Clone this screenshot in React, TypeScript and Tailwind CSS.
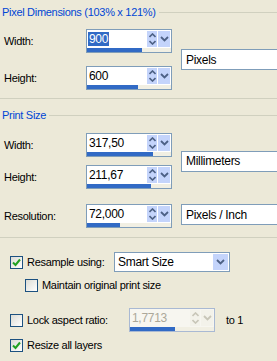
import React from "react"

function SpinButtons({ disabled }: { disabled?: boolean }) {
    const bg = disabled ? "bg-[#f3f2ea]" : "bg-[#c4d4fb]"
    const fg = disabled ? "#c8c6b8" : "#4d6185"
    return (
        <div className="flex h-[16px] gap-[1px] mr-[1px]">
            <div className={`w-[10px] h-full flex flex-col items-center justify-center gap-[2px] ${bg}`}>
                <svg width="7" height="5" viewBox="0 0 7 5">
                    <path d="M0.5 4 L3.5 1 L6.5 4" fill="none" stroke={fg} strokeWidth="1.6" />
                </svg>
                <svg width="7" height="5" viewBox="0 0 7 5">
                    <path d="M0.5 1 L3.5 4 L6.5 1" fill="none" stroke={fg} strokeWidth="1.6" />
                </svg>
            </div>
            <div className={`w-[12px] h-full flex items-center justify-center ${bg}`}>
                <svg width="9" height="6" viewBox="0 0 9 6">
                    <path d="M1 1 L4.5 4.5 L8 1" fill="none" stroke={fg} strokeWidth="1.8" />
                </svg>
            </div>
        </div>
    )
}

function SpinBox({
    value,
    bar,
    selected,
    disabled,
}: {
    value: string
    bar: number
    selected?: boolean
    disabled?: boolean
}) {
    return (
        <div
            className={`w-[86px] h-[24px] shrink-0 border flex flex-col ${
                disabled ? "border-[#a9b9d3] bg-[#f7f6f0]" : "border-[#7f9db9] bg-white"
            }`}
        >
            <div className="h-[18px] flex items-center justify-between">
                <span
                    className={`ml-[1px] px-[1px] leading-[14px] text-[12px] ${
                        selected ? "bg-[#316ac5] text-white" : disabled ? "text-[#aca899]" : "text-black"
                    }`}
                >
                    {value}
                </span>
                <SpinButtons disabled={disabled} />
            </div>
            <div className="h-[4px] bg-[#f1efe3] flex">
                <div className="h-full bg-[#316ac5]" style={{ width: bar }} />
            </div>
        </div>
    )
}

function Field({ text, className = "" }: { text: string; className?: string }) {
    return (
        <div className={`w-[110px] h-[21px] shrink-0 border border-[#7f9db9] bg-white flex items-center pl-[4px] text-[12px] ${className}`}>
            {text}
        </div>
    )
}

function Checkbox({ checked }: { checked?: boolean }) {
    return (
        <div className="w-[13px] h-[13px] border border-[#1c5180] bg-gradient-to-br from-[#dcdcd5] to-white flex items-center justify-center shrink-0">
            {checked && (
                <svg width="9" height="9" viewBox="0 0 9 9">
                    <path d="M1 4.5 L3.5 7 L8 1.5" fill="none" stroke="#21a121" strokeWidth="2" />
                </svg>
            )}
        </div>
    )
}

function Header({ title }: { title: string }) {
    return (
        <div className="h-[14px] flex items-center">
            <span className="pl-[2px] text-[#0046d5] whitespace-nowrap">{title}</span>
            <div className="flex-1 h-px bg-[#d0d0bf] ml-[3px]" />
        </div>
    )
}

function Row({ label, children }: { label: string; children: React.ReactNode }) {
    return (
        <div className="flex items-center h-[24px] shrink-0">
            <span className="w-[86px] pl-[4px]">{label}</span>
            {children}
        </div>
    )
}

export default function App() {
    return (
        <div className="w-[277px] h-[361px] overflow-hidden bg-[#ece9d8] text-black text-[11px] tracking-[-0.3px] font-['Liberation_Sans',Arial,sans-serif]">
            <div className="pt-[5px]">
                <Header title="Pixel Dimensions (103% x 121%)" />
            </div>

            <div className="mt-[10px] flex">
                <div className="flex flex-col gap-[13px] shrink-0">
                    <Row label="Width:">
                        <SpinBox value="900" bar={55} selected />
                    </Row>
                    <Row label="Height:">
                        <SpinBox value="600" bar={51} />
                    </Row>
                </div>
                <Field text="Pixels" className="ml-[9px] self-center" />
            </div>

            <div className="mt-[8px] h-px bg-[#d0d0bf]" />

            <div className="mt-[9px]">
                <Header title="Print Size" />
            </div>

            <div className="mt-[11px] flex">
                <div className="flex flex-col gap-[8px] shrink-0">
                    <Row label="Width:">
                        <SpinBox value="317,50" bar={66} />
                    </Row>
                    <Row label="Height:">
                        <SpinBox value="211,67" bar={64} />
                    </Row>
                </div>
                <Field text="Millimeters" className="ml-[9px] self-center" />
            </div>

            <div className="mt-[15px] flex items-start">
                <Row label="Resolution:">
                    <SpinBox value="72,000" bar={33} />
                </Row>
                <Field text="Pixels / Inch" className="ml-[9px]" />
            </div>

            <div className="mt-[9px] h-px bg-[#d0d0bf]" />

            <div className="mt-[14px] h-[20px] flex items-center pl-[10px]">
                <Checkbox checked />
                <span className="ml-[4px] w-[87px]">Resample using:</span>
                <div className="w-[116px] h-[20px] shrink-0 border border-[#7f9db9] bg-white flex items-center justify-between">
                    <span className="pl-[3px] text-[12px]">Smart Size</span>
                    <div className="w-[15px] h-[16px] mr-[1px] bg-[#c4d4fb] flex items-center justify-center">
                        <svg width="9" height="6" viewBox="0 0 9 6">
                            <path d="M1 1 L4.5 4.5 L8 1" fill="none" stroke="#4d6185" strokeWidth="1.8" />
                        </svg>
                    </div>
                </div>
            </div>

            <div className="mt-[7px] h-[13px] flex items-center pl-[25px]">
                <Checkbox />
                <span className="ml-[4px]">Maintain original print size</span>
            </div>

            <div className="mt-[16px] h-[24px] flex items-center pl-[10px]">
                <Checkbox />
                <span className="ml-[4px] w-[102px]">Lock aspect ratio:</span>
                <SpinBox value="1,7713" bar={45} disabled />
                <span className="ml-[11px]">to 1</span>
            </div>

            <div className="mt-[7px] h-[13px] flex items-center pl-[10px]">
                <Checkbox checked />
                <span className="ml-[4px]">Resize all layers</span>
            </div>
        </div>
    )
}
